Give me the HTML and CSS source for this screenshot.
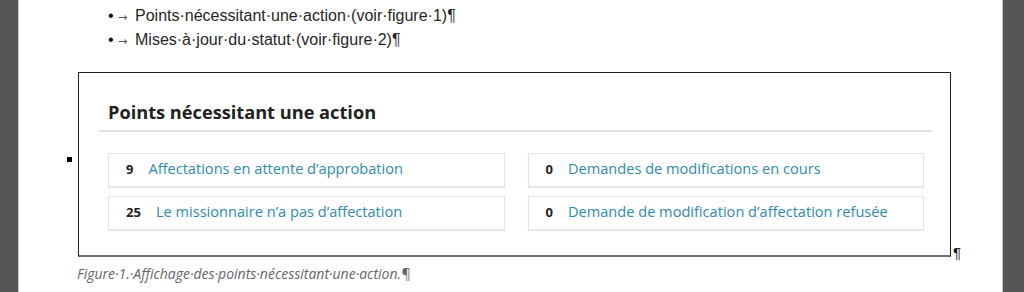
FILE: index.html
```
<!doctype html>
<html lang="fr">
<head>
  <meta charset="utf-8"/>
  <title>Points nécessitant une action</title>
  <link rel="stylesheet" href="styles.css">
</head>
<body>
<div class="page">
  <ul class="bullets">
    <li><span class="dot">•</span><span class="tab">→</span>Points·nécessitant·une·action·(voir·figure·1)¶</li>
    <li><span class="dot">•</span><span class="tab">→</span>Mises·à·jour·du·statut·(voir·figure·2)¶</li>
  </ul>

  <div class="figure-row">
    <div class="frame">
      <span class="anchor"></span>
      <div class="panel">
        <h2 class="panel-title">Points nécessitant une action</h2>
        <div class="cards">
          <a class="card"><b>9</b><span>Affectations en attente d’approbation</span></a>
          <a class="card"><b>0</b><span>Demandes de modifications en cours</span></a>
          <a class="card"><b>25</b><span>Le missionnaire n’a pas d’affectation</span></a>
          <a class="card"><b>0</b><span>Demande de modification d’affectation refusée</span></a>
        </div>
      </div>
    </div>
    <span class="pilcrow">¶</span>
  </div>

  <p class="caption">Figure·1.·Affichage·des·points·nécessitant·une·action.¶</p>
</div>
</body>
</html>
```

FILE: styles.css
```
html, body {
  margin: 0;
  height: 100%;
}
body {
  background: #575454;
  font-family: "Liberation Sans", Arial, sans-serif;
  color: #262626;
}
.page {
  margin-left: 18px;
  width: 985px;
  height: 100%;
  background: #fff;
  border-left: 1px solid #c9c9c9;
  border-right: 1px solid #c9c9c9;
  padding-top: 4px;
  box-sizing: border-box;
  overflow: hidden;
}
.bullets {
  list-style: none;
  margin: 0;
  padding: 0 0 0 89px;
  font-size: 16px;
  line-height: 24px;
}
.dot {
  display: inline-block;
  width: 10px;
  line-height: 1;
  color: #111;
}
.tab {
  display: inline-block;
  width: 17px;
  line-height: 1;
  font-family: "DejaVu Sans", sans-serif;
  font-size: 11px;
  color: #555;
}
.figure-row {
  display: flex;
  align-items: flex-end;
  margin: 20px 0 0 59px;
}
.frame {
  position: relative;
  width: 873px;
  box-sizing: border-box;
  border: 1px solid #1e1e1e;
  border-bottom: 2px solid #707070;
}
.anchor {
  position: absolute;
  left: -12px;
  top: 84px;
  width: 5px;
  height: 5px;
  background: #000;
}
.pilcrow {
  font-size: 15px;
  line-height: 15px;
  margin: 0 0 -3px 2px;
  color: #111;
}
.panel {
  margin: 0 18px 0 20px;
  padding: 27px 0 25px;
  font-family: "Open Sans", sans-serif;
}
.panel-title {
  margin: 0;
  padding: 0 0 6px 9px;
  border-bottom: 2px solid #e2e2e2;
  font-size: 18.2px;
  line-height: 24px;
  font-weight: 700;
  color: #222;
}
.cards {
  display: grid;
  grid-template-columns: 1fr 1fr;
  gap: 9px 23px;
  margin-top: 21px;
  padding: 0 8px 0 9px;
}
.card {
  display: flex;
  align-items: baseline;
  gap: 15px;
  padding: 4px 12px 7px 17px;
  border: 1px solid #e4e4e4;
  box-shadow: 0 1px 1px rgba(0, 0, 0, 0.08);
  font-size: 14.6px;
  line-height: 20px;
}
.card b {
  font-size: 13px;
  color: #222;
}
.card span {
  color: #2f8bab;
}
.caption {
  margin: 8px 0 0 58px;
  font-family: "Open Sans", sans-serif;
  font-size: 14px;
  line-height: 18px;
  font-style: italic;
  color: #666;
}
```
